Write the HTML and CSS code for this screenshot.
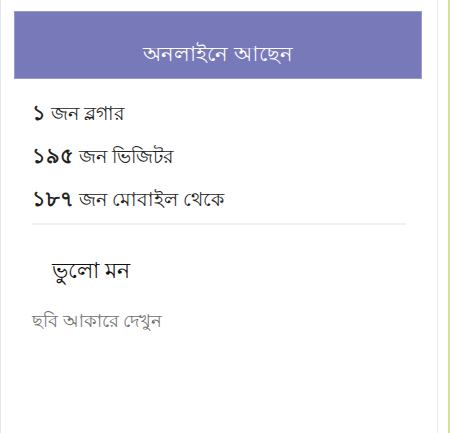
FILE: index.html
```html
<!DOCTYPE html>
<html lang="bn">
<head>
<meta charset="utf-8">
<link rel="stylesheet" href="styles.css">
</head>
<body>
<div class="page">
  <div class="panel">
    <div class="widget-title">অনলাইনে আছেন</div>
    <ul class="stats">
      <li><b>১</b> জন ব্লগার</li>
      <li><b>১৯৫</b> জন ভিজিটর</li>
      <li><b>১৮৭</b> জন মোবাইল থেকে</li>
    </ul>
    <div class="divider"></div>
    <div class="blog-name">ভুলো মন</div>
    <a class="image-link">ছবি আকারে দেখুন</a>
  </div>
  <div class="accent"></div>
</div>
</body>
</html>
```

FILE: styles.css
```css
html, body {
  margin: 0;
  padding: 0;
  background: #ffffff;
}
body {
  font-family: "Noto Sans", "DejaVu Sans", sans-serif;
  color: #222222;
}
.page {
  display: flex;
  width: 450px;
  height: 433px;
  box-sizing: border-box;
  border-left: 1px solid #e3e8ef;
}
.panel {
  width: 437px;
  box-sizing: border-box;
  border-right: 1px solid #ececec;
  padding: 11px 15px 0 13px;
}
.accent {
  margin-left: 10px;
  width: 2px;
  background: #d4e38f;
}
.widget-title {
  background: #7879b9;
  color: #ffffff;
  height: 68px;
  display: flex;
  align-items: center;
  justify-content: center;
  font-size: 21px;
  padding-top: 20px;
  box-sizing: border-box;
  border: 1px solid #9a9bcc;
}
.stats {
  list-style: none;
  margin: 12px 0 0;
  padding: 0 0 0 18px;
  font-size: 19px;
}
.stats li {
  height: 43px;
  line-height: 43px;
}
.stats b {
  font-weight: 700;
  font-size: 21px;
}
.divider {
  margin: 3px 16px 0 18px;
  height: 2px;
  background: #f0f0f0;
}
.blog-name {
  margin: 28px 0 0 38px;
  font-size: 22px;
  color: #111111;
}
.image-link {
  display: block;
  margin: 18px 0 0 18px;
  font-size: 17.5px;
  color: #6f6f6f;
}
```
